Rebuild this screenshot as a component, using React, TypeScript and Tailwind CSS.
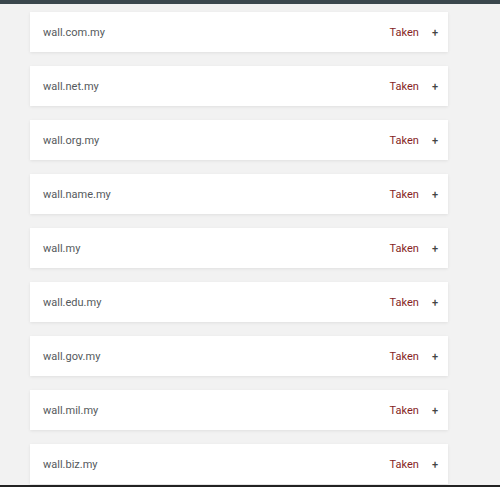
import React from 'react';

const domains = [
  'wall.com.my',
  'wall.net.my',
  'wall.org.my',
  'wall.name.my',
  'wall.my',
  'wall.edu.my',
  'wall.gov.my',
  'wall.mil.my',
  'wall.biz.my',
];

export default function App() {
  return (
    <div className="h-[487px] flex flex-col bg-[#f2f2f2] overflow-hidden" style={{ fontFamily: 'Roboto, "Liberation Sans", sans-serif' }}>
      <div className="h-1 bg-[#3b474d] shrink-0" />
      <div className="flex-1 min-h-0 overflow-hidden pt-2">
        <div className="flex flex-col gap-[14px] ml-[30px] w-[418px]">
          {domains.map(d => (
            <div
              key={d}
              className="h-10 bg-white flex items-center justify-between pl-[13px] pr-[10px] pt-[2px] shadow-[0_1px_3px_rgba(0,0,0,0.08)]"
            >
              <span className="text-[11px] text-[#55595c]">{d}</span>
              <div className="flex items-center gap-[13px]">
                <span className="text-[11px] text-[#861f1f]">Taken</span>
                <span className="text-[11px] text-[#444] font-medium leading-none -mt-px">+</span>
              </div>
            </div>
          ))}
        </div>
      </div>
      <div className="h-[2px] bg-[#222] shrink-0" />
    </div>
  );
}
